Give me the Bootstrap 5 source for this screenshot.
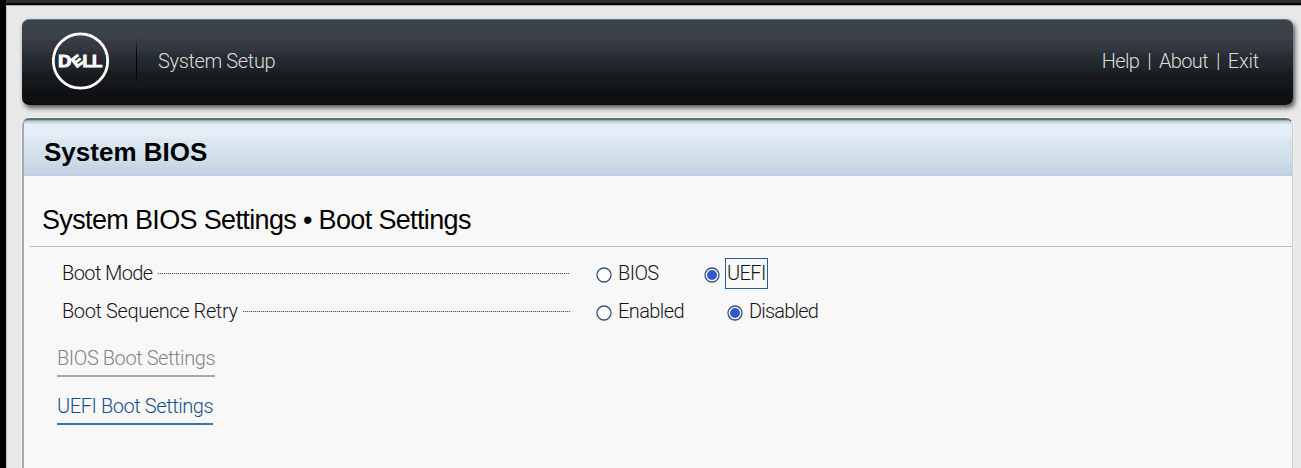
<!DOCTYPE html>
<html lang="en">
<head>
<meta charset="utf-8">
<meta name="viewport" content="width=device-width, initial-scale=1">
<title>System Setup</title>
<link href="https://cdn.jsdelivr.net/npm/bootstrap@5.3.0/dist/css/bootstrap.min.css" rel="stylesheet">
<style>
html,body{height:100%;overflow:hidden}
body{background:#e8e8e8;color:#161616;font:300 20px/24px Roboto,"Liberation Sans",sans-serif;white-space:nowrap;border-left:6px solid #000}
.screen-top{height:5px;background:#2e2d30;border-bottom:2px solid #000;margin-left:-6px}
.screen{height:463px;border-top:1px solid #aaa;border-left:1px solid #c4c4c4;padding:13px 8px 0 14px}
.masthead{height:86px;margin-left:1px;border-radius:7px;color:#dcdcdc;border-top:1px solid #68757b;letter-spacing:-.36px;
 background:linear-gradient(#3a434a 0,#394249 21%,#393a44 24%,#32383f 34%,#252b30 44%,#20272a 55%,#171b1d 64%,#131817 78%,#111219 84%,#101010 90%,#0d0f0f 100%);
 box-shadow:2px 3px 5px rgba(0,0,0,.65);padding:0 34px 3px 30px}
.masthead nav{letter-spacing:-.65px}
.masthead nav span{margin-left:8px}
.masthead nav span:last-child{letter-spacing:-.2px}
.brand{flex:none}
.divider{width:1px;height:46px;margin-left:26px;margin-right:21px;background:linear-gradient(transparent,#050708 30%,#000 70%,transparent)}
.panel{height:360px;margin:13px 0 0 1px;border:2px solid #a4a9b3;border-top:2px solid #5d7077;border-right:1px solid #ccc;border-radius:7px 7px 0 0;background:#f8f8f8;overflow:hidden;box-shadow:0 0 0 1px #f1f1f1}
.panel-title{height:56px;padding:5px 0 0 20px;color:#000;font:700 26px/54px "Liberation Sans",sans-serif;
 background:linear-gradient(#8b9da4 0,#c4ced6 3%,#e6eef6 8%,#e5edf6 23%,#deeef5 30%,#dfe4f0 36%,#d5e6ed 50%,#d1deed 63%,#cddfe5 73%,#c7d6e7 84%,#c4d3e5 95%,#bfc9dd 100%)}
.page-heading{height:71px;margin:0 0 0 6px;padding:17px 0 0 12px;color:#000;border-bottom:1px solid #bbb;font:400 27px/54px "Liberation Sans",sans-serif;letter-spacing:-.65px}
.setting{height:38px;margin-left:38px;padding-top:6px;letter-spacing:-.6px}
.field-label{width:508px;margin-right:26px}
.leader{height:1px;margin-left:5px;background:repeating-linear-gradient(90deg,#555 0 1px,#ddd 1px 2px)}
.radio{width:16px;height:16px;margin-right:6px;flex:none;margin-top:3px}
.first-option{width:86px}
.wide .first-option{width:109px}
.wide .field-label{letter-spacing:-.4px}
.wide .last-option{letter-spacing:-.8px}
.focused{border:1px solid #2a5a9a;height:31px;line-height:28px;width:43px;margin:1px 0 0 -1px;padding-left:1px}
.link-row{height:29px;line-height:20px;width:max-content;border-bottom:2px solid;text-decoration:none;letter-spacing:-.42px;margin-left:33px}
.link-off{color:#858585;border-color:#a8a8a8;margin-top:21px}
.link-on{color:#174f8c;border-color:#3f72a8;margin-top:19px}
</style>
</head>
<body>
<div class="screen-top"></div>
<main class="screen">
 <header class="masthead d-flex align-items-center">
  <svg class="brand" width="58" height="58" viewBox="0 0 58 58" role="img" aria-label="Dell">
   <circle cx="28.5" cy="29" r="27.2" fill="none" stroke="#fff" stroke-width="2.8"/>
   <g fill="#fff" stroke="#fff" stroke-width="1" font-family="Liberation Sans,sans-serif" font-weight="700" font-size="17">
    <text x="6" y="35" textLength="13" lengthAdjust="spacingAndGlyphs">D</text>
    <text x="-5.2" y="5.5" font-size="15" transform="translate(25.3 28.8) rotate(-38)">E</text>
    <text x="30.5" y="35" textLength="10" lengthAdjust="spacingAndGlyphs">L</text>
    <text x="40" y="35" textLength="10" lengthAdjust="spacingAndGlyphs">L</text>
   </g>
  </svg>
  <span class="divider"></span>
  <span>System Setup</span>
  <nav class="ms-auto d-flex"><span>Help</span><span>|</span><span>About</span><span>|</span><span>Exit</span></nav>
 </header>
 <section class="panel">
  <h1 class="panel-title m-0">System BIOS</h1>
  <h2 class="page-heading">System BIOS Settings • Boot Settings</h2>
  <div class="setting d-flex align-items-center mt-1">
   <div class="field-label d-flex align-items-center"><span>Boot Mode</span><span class="leader flex-grow-1"></span></div>
   <svg class="radio" viewBox="0 0 16 16"><circle cx="8" cy="8" r="7" fill="#fff" stroke="#35547c" stroke-width="1.3"/></svg><span class="first-option">BIOS</span>
   <svg class="radio" viewBox="0 0 16 16"><circle cx="8" cy="8" r="7" fill="#fff" stroke="#35547c" stroke-width="1.3"/><circle cx="8" cy="8" r="5" fill="#3458cc"/></svg><span class="focused">UEFI</span>
  </div>
  <div class="setting wide d-flex align-items-center">
   <div class="field-label d-flex align-items-center"><span>Boot Sequence Retry</span><span class="leader flex-grow-1"></span></div>
   <svg class="radio" viewBox="0 0 16 16"><circle cx="8" cy="8" r="7" fill="#fff" stroke="#35547c" stroke-width="1.3"/></svg><span class="first-option">Enabled</span>
   <svg class="radio" viewBox="0 0 16 16"><circle cx="8" cy="8" r="7" fill="#fff" stroke="#35547c" stroke-width="1.3"/><circle cx="8" cy="8" r="5" fill="#3458cc"/></svg><span class="last-option">Disabled</span>
  </div>
  <div class="link-row link-off">BIOS Boot Settings</div>
  <a class="link-row link-on d-block" href="#">UEFI Boot Settings</a>
 </section>
</main>
<script src="https://cdn.jsdelivr.net/npm/bootstrap@5.3.0/dist/js/bootstrap.bundle.min.js"></script>
</body>
</html>
